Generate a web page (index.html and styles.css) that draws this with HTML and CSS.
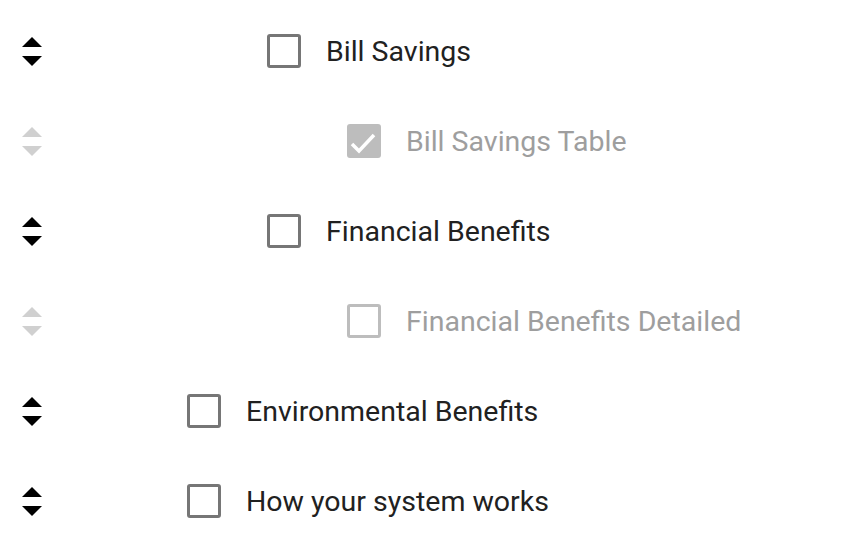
FILE: index.html
```html
<!DOCTYPE html>
<html>
<head>
<meta charset="utf-8">
<link rel="stylesheet" href="styles.css">
</head>
<body>
<ul class="list">
  <li class="row level-2">
    <span class="handle"><svg viewBox="0 0 20 30" width="20" height="30"><polygon points="10,0 20,10 0,10"/><polygon points="0,19 20,19 10,29"/></svg></span>
    <span class="box"></span>
    <span class="label">Bill Savings</span>
  </li>
  <li class="row level-3 disabled">
    <span class="handle"><svg viewBox="0 0 20 30" width="20" height="30"><polygon points="10,0 20,10 0,10"/><polygon points="0,19 20,19 10,29"/></svg></span>
    <span class="box checked"><svg viewBox="0 0 34 34" width="34" height="34"><polyline points="5,20 12,27 27,11"/></svg></span>
    <span class="label">Bill Savings Table</span>
  </li>
  <li class="row level-2">
    <span class="handle"><svg viewBox="0 0 20 30" width="20" height="30"><polygon points="10,0 20,10 0,10"/><polygon points="0,19 20,19 10,29"/></svg></span>
    <span class="box"></span>
    <span class="label">Financial Benefits</span>
  </li>
  <li class="row level-3 disabled">
    <span class="handle"><svg viewBox="0 0 20 30" width="20" height="30"><polygon points="10,0 20,10 0,10"/><polygon points="0,19 20,19 10,29"/></svg></span>
    <span class="box"></span>
    <span class="label">Financial Benefits Detailed</span>
  </li>
  <li class="row level-1">
    <span class="handle"><svg viewBox="0 0 20 30" width="20" height="30"><polygon points="10,0 20,10 0,10"/><polygon points="0,19 20,19 10,29"/></svg></span>
    <span class="box"></span>
    <span class="label">Environmental Benefits</span>
  </li>
  <li class="row level-1">
    <span class="handle"><svg viewBox="0 0 20 30" width="20" height="30"><polygon points="10,0 20,10 0,10"/><polygon points="0,19 20,19 10,29"/></svg></span>
    <span class="box"></span>
    <span class="label">How your system works</span>
  </li>
</ul>
</body>
</html>
```
FILE: styles.css
```css
html, body {
  margin: 0;
  padding: 0;
  background: #ffffff;
}
body {
  font-family: Roboto, "Liberation Sans", sans-serif;
}
.list {
  list-style: none;
  margin: 0;
  padding: 6px 0 0 0;
}
.row {
  display: flex;
  align-items: center;
  height: 90px;
  padding-left: 22px;
}
.handle {
  display: flex;
  width: 20px;
  height: 30px;
  margin-top: 2px;
}
.handle svg {
  fill: #000000;
}
.level-1 .handle { margin-right: 145px; }
.level-2 .handle { margin-right: 225px; }
.level-3 .handle { margin-right: 305px; }
.box {
  box-sizing: border-box;
  width: 34px;
  height: 34px;
  border: 3px solid #767676;
  border-radius: 3px;
  position: relative;
  flex: none;
}
.box.checked {
  background: #bdbdbd;
  border-color: #bdbdbd;
}
.box.checked svg {
  position: absolute;
  left: -3px;
  top: -3px;
  fill: none;
  stroke: #ffffff;
  stroke-width: 3.5;
}
.label {
  margin-left: 25px;
  font-size: 28.5px;
  color: #212121;
  line-height: 34px;
  padding-top: 2px;
}
.disabled .handle svg { fill: #d0d0d0; }
.disabled .box { border-color: #bdbdbd; }
.disabled .label { color: #9e9e9e; }
```
